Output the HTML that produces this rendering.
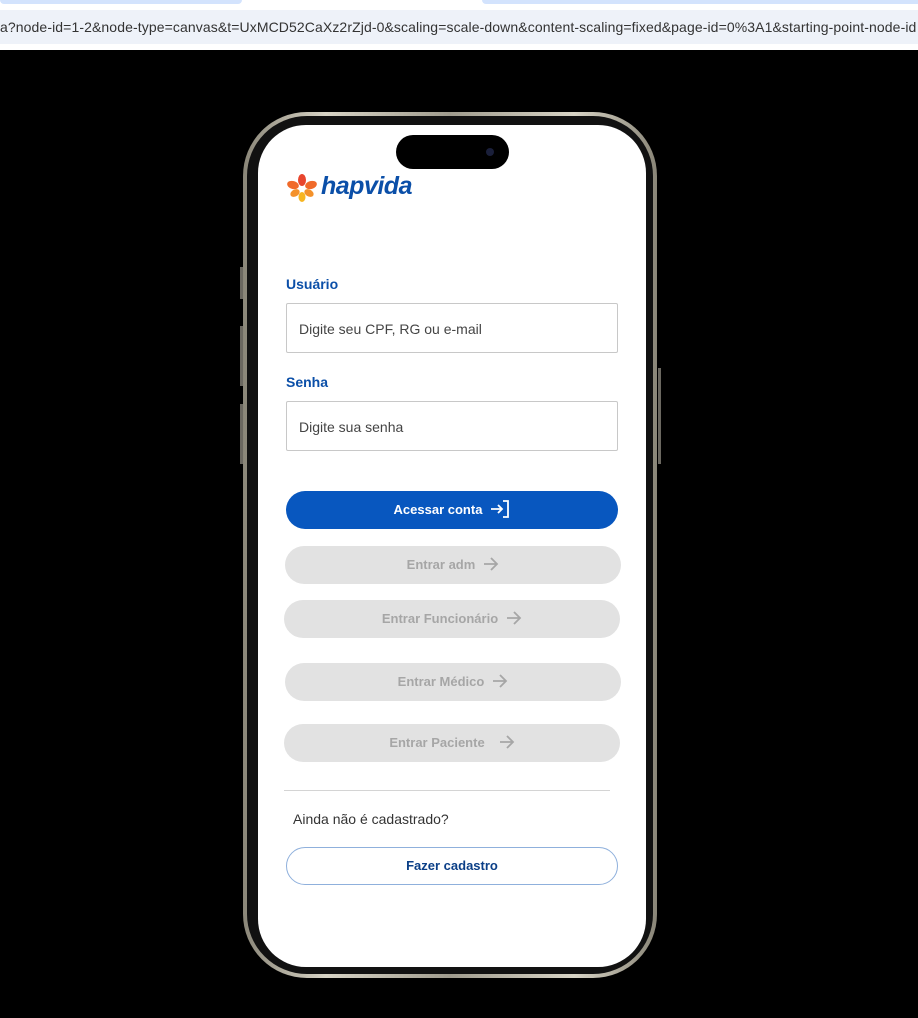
<!DOCTYPE html><html><head><style>
body{margin:0;width:918px;height:1018px;background:#000;position:relative;overflow:hidden;font-family:"Liberation Sans",sans-serif}
.top{position:absolute;left:0;top:0;width:918px;height:50px;background:#fff}
.tab1{position:absolute;left:0;top:0;width:242px;height:4px;background:#d3e3fd;border-radius:0 0 8px 8px}
.tab2{position:absolute;left:482px;top:0;width:436px;height:4px;background:#d3e3fd;border-radius:0 0 0 8px}
.url{position:absolute;left:0;top:10px;width:918px;height:34px;background:#eef2f9;font-size:14px;color:#333;line-height:34px;white-space:nowrap;overflow:hidden;letter-spacing:0.1px}
.phone{position:absolute;left:243px;top:112px;width:414px;height:866px;border-radius:64px;background:linear-gradient(90deg,#8a8678,#d8d4c6 20%,#a09c8e 50%,#d8d4c6 80%,#8a8678)}
.inner{position:absolute;left:4px;top:4px;right:4px;bottom:4px;border-radius:60px;background:#111}
.screen{position:absolute;left:258px;top:125px;width:388px;height:842px;border-radius:48px;background:#fff}
.island{position:absolute;left:396px;top:135px;width:113px;height:34px;border-radius:17px;background:#000}
.lbl{position:absolute;left:286px;font-size:14px;font-weight:bold;color:#0b4fa8}
.inp{position:absolute;left:286px;width:332px;height:48px;border:1px solid #c8c8c8;border-radius:2px;font-size:14px;color:#444;line-height:48px;padding-left:12px;box-sizing:border-box}
.btn{position:absolute;height:38px;border-radius:19px;background:#e2e2e2;color:#a6a6a6;font-size:13px;font-weight:bold;text-align:center;line-height:38px}
.btn svg{vertical-align:middle;margin-left:8px;margin-top:-3px}
.side{position:absolute;background:#6b6860;width:3px}
</style></head><body>
<div class="top"><div class="tab1"></div><div class="tab2"></div><div class="url">a?node-id=1-2&amp;node-type=canvas&amp;t=UxMCD52CaXz2rZjd-0&amp;scaling=scale-down&amp;content-scaling=fixed&amp;page-id=0%3A1&amp;starting-point-node-id</div></div>
<div class="side" style="left:240px;top:267px;height:32px"></div>
<div class="side" style="left:240px;top:326px;height:60px"></div>
<div class="side" style="left:240px;top:404px;height:60px"></div>
<div class="side" style="left:658px;top:368px;height:96px"></div>
<div class="phone"><div class="inner"></div></div>
<div class="screen"></div>
<div class="island"><div style="position:absolute;left:90px;top:13px;width:8px;height:8px;border-radius:4px;background:#1a1f3a"></div></div>
<svg style="position:absolute;left:286px;top:172px" width="32" height="32" viewBox="0 0 32 32">
<ellipse cx="16" cy="8" rx="4" ry="6" fill="#e8462e"/>
<ellipse cx="7" cy="13" rx="6" ry="4" fill="#f06a2a" transform="rotate(15 7 13)"/>
<ellipse cx="25" cy="13" rx="6" ry="4" fill="#f06a2a" transform="rotate(-15 25 13)"/>
<ellipse cx="9" cy="21" rx="5" ry="3.5" fill="#f4912a" transform="rotate(-30 9 21)"/>
<ellipse cx="23" cy="21" rx="5" ry="3.5" fill="#f4912a" transform="rotate(30 23 21)"/>
<ellipse cx="16" cy="25" rx="3.5" ry="5" fill="#f7b521"/>
</svg>
<div style="position:absolute;left:321px;top:172px;font-size:25px;font-weight:bold;font-style:italic;color:#0b4fa8;letter-spacing:-0.5px">hapvida</div>
<div class="lbl" style="top:276px">Usuário</div>
<div class="inp" style="top:303px;height:50px;line-height:50px">Digite seu CPF, RG ou e-mail</div>
<div class="lbl" style="top:374px">Senha</div>
<div class="inp" style="top:401px;height:50px;line-height:50px">Digite sua senha</div>
<div class="btn" style="left:286px;top:491px;width:332px;background:#0857bf;color:#fff;">Acessar conta<svg width="20" height="18" viewBox="0 0 20 18" fill="none" stroke="#fff" stroke-width="1.8"><path d="M1 9h11M8 5l4 4-4 4M13 1h5v16h-5"/></svg></div>
<div class="btn" style="left:285px;top:546px;width:336px">Entrar adm<svg width="16" height="14" viewBox="0 0 16 14" fill="none" stroke="#a6a6a6" stroke-width="1.8"><path d="M1 7h13M8 1l6 6-6 6"/></svg></div>
<div class="btn" style="left:284px;top:600px;width:336px">Entrar Funcionário<svg width="16" height="14" viewBox="0 0 16 14" fill="none" stroke="#a6a6a6" stroke-width="1.8"><path d="M1 7h13M8 1l6 6-6 6"/></svg></div>
<div class="btn" style="left:285px;top:663px;width:336px">Entrar Médico<svg width="16" height="14" viewBox="0 0 16 14" fill="none" stroke="#a6a6a6" stroke-width="1.8"><path d="M1 7h13M8 1l6 6-6 6"/></svg></div>
<div class="btn" style="left:284px;top:724px;width:336px">Entrar Paciente<svg width="16" height="14" viewBox="0 0 16 14" fill="none" stroke="#a6a6a6" stroke-width="1.8" style="margin-left:14px"><path d="M1 7h13M8 1l6 6-6 6"/></svg></div>
<div style="position:absolute;left:284px;top:790px;width:326px;height:1px;background:#d4d4d4"></div>
<div style="position:absolute;left:293px;top:811px;font-size:14px;color:#333">Ainda não é cadastrado?</div>
<div style="position:absolute;left:286px;top:847px;width:332px;height:38px;box-sizing:border-box;border:1px solid #8fb0dc;border-radius:19px;text-align:center;line-height:36px;font-size:13px;font-weight:bold;color:#0b3f87">Fazer cadastro</div>
</body></html>
